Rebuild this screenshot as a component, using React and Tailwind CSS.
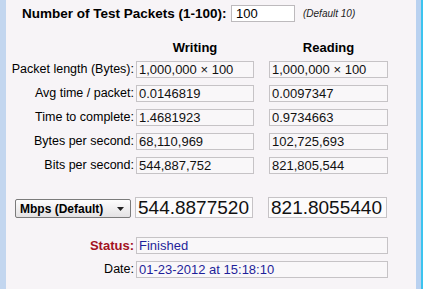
export default function App() {
  const font = { fontFamily: '"Liberation Sans", Arial, sans-serif' };
  const rows = [
    ["Packet length (Bytes):", "1,000,000 × 100", "1,000,000 × 100"],
    ["Avg time / packet:", "0.0146819", "0.0097347"],
    ["Time to complete:", "1.4681923", "0.9734663"],
    ["Bytes per second:", "68,110,969", "102,725,693"],
    ["Bits per second:", "544,887,752", "821,805,544"],
  ];
  const box =
    "h-[17px] border border-[#c6c3c6] bg-[#f9f7f9] flex items-center pl-[2px] text-[13px] text-[#111] leading-none whitespace-nowrap overflow-hidden";
  return (
    <div className="w-[423px] h-[300px] bg-white" style={font}>
      <div className="flex h-[289px]">
        <div className="w-[6px] bg-[#c3d6ef]" />
        <div className="flex-1 bg-[#f7f4f7] pt-[5px] flex flex-col">
          {/* title row */}
          <div className="flex items-center h-[17px]">
            <div className="pl-[16px] w-[225px] text-[13.5px] font-bold text-black whitespace-nowrap leading-none">
              Number of Test Packets (1-100):
            </div>
            <div className="w-[64px] h-[17px] border border-[#bdbabd] bg-white flex items-center pl-[4px] text-[13px] leading-none">
              100
            </div>
            <div className="ml-[8px] text-[10px] italic text-[#222] leading-none whitespace-nowrap">
              (Default 10)
            </div>
          </div>

          {/* headings */}
          <div className="flex mt-[16px] h-[18px] items-center">
            <div className="w-[130px]" />
            <div className="w-[118px] text-center text-[13px] font-bold leading-none">Writing</div>
            <div className="w-[119px] ml-[15px] text-center text-[13px] font-bold leading-none">Reading</div>
          </div>

          {/* data rows */}
          <div className="flex flex-col gap-[7px] mt-[5px]">
            {rows.map(([label, w, r]) => (
              <div key={label} className="flex items-center">
                <div className="w-[130px] pr-[2px] text-right text-[12.5px] leading-none text-black whitespace-nowrap">
                  {label}
                </div>
                <div className={`w-[118px] ${box}`}>{w}</div>
                <div className={`w-[119px] ml-[15px] ${box}`}>{r}</div>
              </div>
            ))}
          </div>

          {/* big values */}
          <div className="flex items-end mt-[23px] h-[21px]">
            <div className="ml-[9px] w-[116px] h-[19px] rounded-[2px] border border-[#7b7b7b] bg-gradient-to-b from-[#fdfdfd] to-[#e4e2e4] flex items-center pl-[4px] pr-[6px] justify-between">
              <span className="text-[12px] font-bold leading-none text-black whitespace-nowrap">Mbps (Default)</span>
              <svg width="7" height="4" viewBox="0 0 7 4" className="mt-[1px]">
                <polygon points="0,0 7,0 3.5,4" fill="#222" />
              </svg>
            </div>
            <div className="ml-[4px] w-[118px] h-[21px] border border-[#c6c3c6] bg-[#fcfbfc] flex items-center pl-[2px] text-[19px] leading-none text-[#111]">
              544.8877520
            </div>
            <div className="ml-[15px] w-[119px] h-[21px] border border-[#c6c3c6] bg-[#fcfbfc] flex items-center pl-[2px] text-[19px] leading-none text-[#111]">
              821.8055440
            </div>
          </div>

          {/* status */}
          <div className="flex items-center mt-[19px]">
            <div className="w-[130px] pr-[2px] text-right text-[13px] font-bold leading-none text-[#a3121f]">
              Status:
            </div>
            <div className="w-[252px] h-[17px] border border-[#c6c3c6] bg-[#f9f7f9] flex items-center pl-[2px] text-[13px] leading-none text-[#1f1f9a]">
              Finished
            </div>
          </div>
          <div className="flex items-center mt-[7px]">
            <div className="w-[130px] pr-[2px] text-right text-[12.5px] leading-none text-black">Date:</div>
            <div className="w-[252px] h-[17px] border border-[#c6c3c6] bg-[#f9f7f9] flex items-center pl-[2px] text-[13px] leading-none text-[#1f1f9a] whitespace-nowrap">
              01-23-2012 at 15:18:10
            </div>
          </div>
        </div>
        <div className="w-[5px] bg-[#b9d1f0]" />
        <div className="w-[2px] bg-[#3cc3ef]" />
      </div>
    </div>
  );
}
